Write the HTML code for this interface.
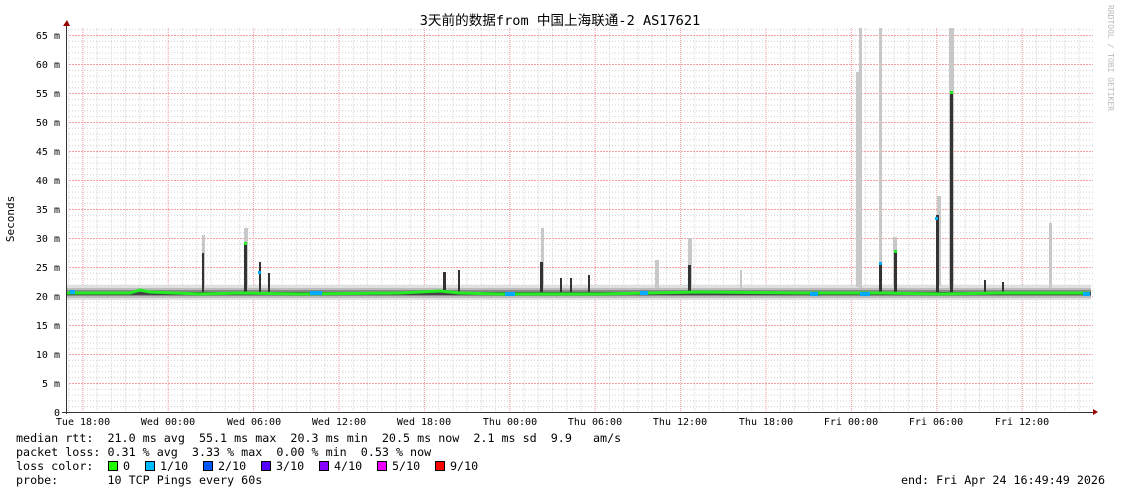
<!DOCTYPE html>
<html><head><meta charset="utf-8"><style>
body{margin:0;background:#fff;width:1121px;height:494px;overflow:hidden}
svg{display:block}
text{font-family:"DejaVu Sans Mono","Liberation Mono",monospace;font-size:10px;fill:#000;white-space:pre}
.l{font-size:11.7px}
</style></head><body>
<svg width="1121" height="494" viewBox="0 0 1121 494">
<defs>
<pattern id="vmin" x="68.1" y="0" width="14.233" height="4" patternUnits="userSpaceOnUse"><rect x="0" y="0" width="1" height="1" fill="#d8d8d8"/><rect x="0" y="2" width="1" height="1" fill="#d8d8d8"/></pattern>
<pattern id="hmin" x="0" y="412" width="3" height="5.8" patternUnits="userSpaceOnUse"><rect x="0" y="0" width="1" height="1" fill="#d0d0d0"/></pattern>
<pattern id="vmaj" x="82.3" y="0" width="85.4" height="4" patternUnits="userSpaceOnUse"><rect x="0" y="0" width="1" height="1" fill="#f2a0a0"/><rect x="0" y="2" width="1" height="1" fill="#f2a0a0"/></pattern>
<pattern id="hmaj" x="0" y="412" width="3" height="29" patternUnits="userSpaceOnUse"><rect x="0" y="0" width="2" height="1" fill="#f2a0a0"/></pattern>
</defs>
<text x="560" y="25" text-anchor="middle" style="font-family:'DejaVu Sans Mono','Noto Sans CJK SC',monospace;font-size:13.6px">3天前的数据from 中国上海联通-2 AS17621</text>
<text transform="translate(1108,5) rotate(90)" style="font-size:8px;fill:#bbb">RRDTOOL / TOBI OETIKER</text>
<text transform="translate(14,219) rotate(-90)" text-anchor="middle" style="font-size:11px">Seconds</text>
<rect x="68" y="28" width="1025" height="384" fill="url(#hmin)"/>
<rect x="68" y="28" width="1025" height="384" fill="url(#vmin)"/>
<rect x="68" y="28" width="1025" height="384" fill="url(#hmaj)"/>
<rect x="68" y="28" width="1025" height="384" fill="url(#vmaj)"/>
<rect x="67" y="285" width="1024" height="15" fill="#e0e0e0"/>
<rect x="67" y="288" width="1024" height="10" fill="#bcbcbc"/>
<rect x="67" y="290" width="1024" height="6" fill="#888"/>
<rect x="67" y="292" width="1024" height="3" fill="#444"/>
<g fill="#c8c8c8">
<rect x="856" y="72" width="5" height="215"/><rect x="859" y="28" width="3" height="260"/>
<rect x="879" y="28" width="3" height="260"/><rect x="949" y="28" width="5" height="260"/>
<rect x="1049" y="223" width="3" height="65"/><rect x="688" y="238" width="4" height="50"/>
<rect x="541" y="228" width="3" height="60"/><rect x="244" y="228" width="4" height="60"/>
<rect x="202" y="235" width="3" height="55"/><rect x="937" y="196" width="4" height="90"/>
<rect x="893" y="237" width="4" height="50"/><rect x="740" y="270" width="2" height="18"/>
<rect x="655" y="260" width="4" height="28"/>
</g>
<g fill="#333">
<rect x="202" y="253" width="2" height="40"/><rect x="244" y="242" width="3" height="50"/>
<rect x="259" y="262" width="2" height="30"/><rect x="268" y="273" width="2" height="20"/>
<rect x="443" y="272" width="3" height="20"/><rect x="458" y="270" width="2" height="22"/>
<rect x="540" y="262" width="3" height="30"/><rect x="560" y="278" width="2" height="14"/>
<rect x="570" y="278" width="2" height="14"/><rect x="588" y="275" width="2" height="17"/>
<rect x="688" y="265" width="3" height="27"/><rect x="879" y="262" width="3" height="30"/>
<rect x="894" y="250" width="3" height="42"/><rect x="936" y="215" width="3" height="77"/>
<rect x="950" y="92" width="3" height="200"/><rect x="984" y="280" width="2" height="12"/>
<rect x="1002" y="282" width="2" height="10"/>
</g>
<polyline points="67,293 130,293 140,290 150,292 200,294 240,293 300,294 400,293 440,291 460,293 500,294 600,294 700,292 800,293 880,293 940,294 1000,293 1090,293" fill="none" stroke="#22ee22" stroke-width="3"/>
<g fill="#00aaff"><rect x="70" y="290" width="5" height="4"/><rect x="310" y="291" width="12" height="4"/><rect x="505" y="292" width="10" height="4"/><rect x="640" y="291" width="8" height="4"/><rect x="810" y="292" width="8" height="4"/><rect x="860" y="292" width="10" height="4"/><rect x="1083" y="292" width="7" height="4"/><rect x="258" y="271" width="3" height="3"/><rect x="935" y="217" width="3" height="3"/><rect x="879" y="262" width="3" height="3"/></g>
<g fill="#22ee22"><rect x="950" y="91" width="3" height="3"/><rect x="894" y="250" width="3" height="3"/><rect x="244" y="242" width="3" height="3"/></g>
<rect x="66" y="26" width="1" height="388" fill="#333"/>
<rect x="62" y="412" width="1033" height="1" fill="#333"/>
<path d="M63,26 L67,20 L70,26 Z" fill="#900"/>
<path d="M1093,409 L1098,412 L1093,415 Z" fill="#900"/>
<g text-anchor="end">
<text x="60" y="416">0</text><text x="60" y="387">5 m</text><text x="60" y="358">10 m</text><text x="60" y="329">15 m</text><text x="60" y="300">20 m</text><text x="60" y="271">25 m</text><text x="60" y="242">30 m</text><text x="60" y="213">35 m</text><text x="60" y="184">40 m</text><text x="60" y="155">45 m</text><text x="60" y="126">50 m</text><text x="60" y="97">55 m</text><text x="60" y="68">60 m</text><text x="60" y="39">65 m</text>
</g>
<g text-anchor="middle">
<text x="83" y="425">Tue 18:00</text><text x="168" y="425">Wed 00:00</text><text x="254" y="425">Wed 06:00</text><text x="339" y="425">Wed 12:00</text><text x="424" y="425">Wed 18:00</text><text x="510" y="425">Thu 00:00</text><text x="595" y="425">Thu 06:00</text><text x="680" y="425">Thu 12:00</text><text x="766" y="425">Thu 18:00</text><text x="851" y="425">Fri 00:00</text><text x="936" y="425">Fri 06:00</text><text x="1022" y="425">Fri 12:00</text>
</g>
<text x="16" y="442" class="l">median rtt:  21.0 ms avg  55.1 ms max  20.3 ms min  20.5 ms now  2.1 ms sd  9.9   am/s</text>
<text x="16" y="456" class="l">packet loss: 0.31 % avg  3.33 % max  0.00 % min  0.53 % now</text>
<text x="16" y="470" class="l">loss color:</text>
<text x="16" y="484" class="l">probe:       10 TCP Pings every 60s</text>
<text x="1105" y="484" text-anchor="end" class="l">end: Fri Apr 24 16:49:49 2026</text>
<g stroke="#000" stroke-width="1">
<rect x="108.5" y="461.5" width="9" height="9" fill="#22ff00"/>
<rect x="145.5" y="461.5" width="9" height="9" fill="#00bbff"/>
<rect x="203.5" y="461.5" width="9" height="9" fill="#0055ff"/>
<rect x="261.5" y="461.5" width="9" height="9" fill="#5500ff"/>
<rect x="319.5" y="461.5" width="9" height="9" fill="#8800ff"/>
<rect x="377.5" y="461.5" width="9" height="9" fill="#ee00ff"/>
<rect x="435.5" y="461.5" width="9" height="9" fill="#ff0000"/>
</g>
<text x="123" y="470" class="l">0</text><text x="160" y="470" class="l">1/10</text><text x="218" y="470" class="l">2/10</text><text x="276" y="470" class="l">3/10</text><text x="334" y="470" class="l">4/10</text><text x="392" y="470" class="l">5/10</text><text x="450" y="470" class="l">9/10</text>
</svg>
</body></html>
